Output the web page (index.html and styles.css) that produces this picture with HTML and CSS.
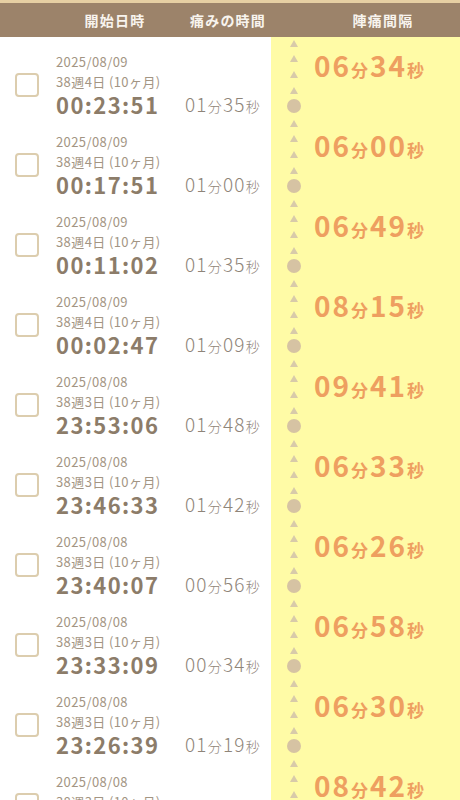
FILE: index.html
```html
<!DOCTYPE html>
<html lang="ja">
<head>
<meta charset="utf-8">
<link rel="stylesheet" href="styles.css">
</head>
<body>
<div class="top-strip"></div>
<header class="head">
  <div class="h-start">開始日時</div>
  <div class="h-dur">痛みの時間</div>
  <div class="h-int">陣痛間隔</div>
</header>
<ul class="list">
  <li class="row">
    <div class="left">
      <span class="check"></span>
      <div class="info"><div class="date">2025/08/09</div><div class="week">38週4日 (10ヶ月)</div><div class="time">00:23:51</div></div>
      <div class="dur">01<small>分</small>35<small>秒</small></div>
    </div>
    <div class="right">
      <div class="line"><span class="slot"><i class="tri"></i></span><span class="slot"><i class="tri"></i></span><span class="slot"><i class="tri"></i></span><span class="slot"><i class="tri"></i></span><span class="slot"><i class="dot"></i></span></div>
      <div class="interval">06<small>分</small>34<small>秒</small></div>
    </div>
  </li>
  <li class="row">
    <div class="left">
      <span class="check"></span>
      <div class="info"><div class="date">2025/08/09</div><div class="week">38週4日 (10ヶ月)</div><div class="time">00:17:51</div></div>
      <div class="dur">01<small>分</small>00<small>秒</small></div>
    </div>
    <div class="right">
      <div class="line"><span class="slot"><i class="tri"></i></span><span class="slot"><i class="tri"></i></span><span class="slot"><i class="tri"></i></span><span class="slot"><i class="tri"></i></span><span class="slot"><i class="dot"></i></span></div>
      <div class="interval">06<small>分</small>00<small>秒</small></div>
    </div>
  </li>
  <li class="row">
    <div class="left">
      <span class="check"></span>
      <div class="info"><div class="date">2025/08/09</div><div class="week">38週4日 (10ヶ月)</div><div class="time">00:11:02</div></div>
      <div class="dur">01<small>分</small>35<small>秒</small></div>
    </div>
    <div class="right">
      <div class="line"><span class="slot"><i class="tri"></i></span><span class="slot"><i class="tri"></i></span><span class="slot"><i class="tri"></i></span><span class="slot"><i class="tri"></i></span><span class="slot"><i class="dot"></i></span></div>
      <div class="interval">06<small>分</small>49<small>秒</small></div>
    </div>
  </li>
  <li class="row">
    <div class="left">
      <span class="check"></span>
      <div class="info"><div class="date">2025/08/09</div><div class="week">38週4日 (10ヶ月)</div><div class="time">00:02:47</div></div>
      <div class="dur">01<small>分</small>09<small>秒</small></div>
    </div>
    <div class="right">
      <div class="line"><span class="slot"><i class="tri"></i></span><span class="slot"><i class="tri"></i></span><span class="slot"><i class="tri"></i></span><span class="slot"><i class="tri"></i></span><span class="slot"><i class="dot"></i></span></div>
      <div class="interval">08<small>分</small>15<small>秒</small></div>
    </div>
  </li>
  <li class="row">
    <div class="left">
      <span class="check"></span>
      <div class="info"><div class="date">2025/08/08</div><div class="week">38週3日 (10ヶ月)</div><div class="time">23:53:06</div></div>
      <div class="dur">01<small>分</small>48<small>秒</small></div>
    </div>
    <div class="right">
      <div class="line"><span class="slot"><i class="tri"></i></span><span class="slot"><i class="tri"></i></span><span class="slot"><i class="tri"></i></span><span class="slot"><i class="tri"></i></span><span class="slot"><i class="dot"></i></span></div>
      <div class="interval">09<small>分</small>41<small>秒</small></div>
    </div>
  </li>
  <li class="row">
    <div class="left">
      <span class="check"></span>
      <div class="info"><div class="date">2025/08/08</div><div class="week">38週3日 (10ヶ月)</div><div class="time">23:46:33</div></div>
      <div class="dur">01<small>分</small>42<small>秒</small></div>
    </div>
    <div class="right">
      <div class="line"><span class="slot"><i class="tri"></i></span><span class="slot"><i class="tri"></i></span><span class="slot"><i class="tri"></i></span><span class="slot"><i class="tri"></i></span><span class="slot"><i class="dot"></i></span></div>
      <div class="interval">06<small>分</small>33<small>秒</small></div>
    </div>
  </li>
  <li class="row">
    <div class="left">
      <span class="check"></span>
      <div class="info"><div class="date">2025/08/08</div><div class="week">38週3日 (10ヶ月)</div><div class="time">23:40:07</div></div>
      <div class="dur">00<small>分</small>56<small>秒</small></div>
    </div>
    <div class="right">
      <div class="line"><span class="slot"><i class="tri"></i></span><span class="slot"><i class="tri"></i></span><span class="slot"><i class="tri"></i></span><span class="slot"><i class="tri"></i></span><span class="slot"><i class="dot"></i></span></div>
      <div class="interval">06<small>分</small>26<small>秒</small></div>
    </div>
  </li>
  <li class="row">
    <div class="left">
      <span class="check"></span>
      <div class="info"><div class="date">2025/08/08</div><div class="week">38週3日 (10ヶ月)</div><div class="time">23:33:09</div></div>
      <div class="dur">00<small>分</small>34<small>秒</small></div>
    </div>
    <div class="right">
      <div class="line"><span class="slot"><i class="tri"></i></span><span class="slot"><i class="tri"></i></span><span class="slot"><i class="tri"></i></span><span class="slot"><i class="tri"></i></span><span class="slot"><i class="dot"></i></span></div>
      <div class="interval">06<small>分</small>58<small>秒</small></div>
    </div>
  </li>
  <li class="row">
    <div class="left">
      <span class="check"></span>
      <div class="info"><div class="date">2025/08/08</div><div class="week">38週3日 (10ヶ月)</div><div class="time">23:26:39</div></div>
      <div class="dur">01<small>分</small>19<small>秒</small></div>
    </div>
    <div class="right">
      <div class="line"><span class="slot"><i class="tri"></i></span><span class="slot"><i class="tri"></i></span><span class="slot"><i class="tri"></i></span><span class="slot"><i class="tri"></i></span><span class="slot"><i class="dot"></i></span></div>
      <div class="interval">06<small>分</small>30<small>秒</small></div>
    </div>
  </li>
  <li class="row">
    <div class="left">
      <span class="check"></span>
      <div class="info"><div class="date">2025/08/08</div><div class="week">38週3日 (10ヶ月)</div><div class="time">23:20:09</div></div>
      <div class="dur">01<small>分</small>02<small>秒</small></div>
    </div>
    <div class="right">
      <div class="line"><span class="slot"><i class="tri"></i></span><span class="slot"><i class="tri"></i></span><span class="slot"><i class="tri"></i></span><span class="slot"><i class="tri"></i></span><span class="slot"><i class="dot"></i></span></div>
      <div class="interval">08<small>分</small>42<small>秒</small></div>
    </div>
  </li>
</ul>
</body>
</html>
```
FILE: styles.css
```css
* { box-sizing: border-box; }
html, body {
  margin: 0;
  padding: 0;
  background: #ffffff;
  font-family: "Noto Sans CJK JP", "Noto Sans", sans-serif;
  overflow: hidden;
  height: 800px;
}
.top-strip {
  height: 3px;
  background: #e6cfa3;
}
.head {
  height: 34px;
  background: #9c836a;
  display: grid;
  grid-template-columns: 56px 118px 108px 24px 154px;
  align-items: center;
  color: #f8f4ee;
  font-size: 14px;
  font-weight: 700;
  letter-spacing: 1.2px;
  text-align: center;
}
.h-start { grid-column: 2; }
.h-dur { grid-column: 3; }
.h-int { grid-column: 5; }
.list {
  list-style: none;
  margin: 0;
  padding: 0;
}
.row {
  display: flex;
  height: 80px;
}
.left {
  width: 271px;
  display: flex;
  padding-left: 15px;
  background: #ffffff;
}
.check {
  width: 24px;
  height: 24px;
  margin-top: 36px;
  border: 2px solid #dccdae;
  border-radius: 4px;
  flex: none;
}
.info {
  width: 129px;
  margin-left: 17px;
  padding-top: 15px;
  flex: none;
}
.date, .week {
  font-size: 13px;
  line-height: 20px;
  color: #a39583;
  letter-spacing: 0.4px;
  white-space: nowrap;
}
.time {
  font-size: 22px;
  line-height: 24px;
  font-weight: 700;
  color: #8c7c69;
  letter-spacing: 1.4px;
}
.dur {
  margin-top: 55px;
  font-size: 19px;
  line-height: 24px;
  font-weight: 300;
  color: #8f8579;
  letter-spacing: 1.2px;
  white-space: nowrap;
  height: 24px;
}
.dur small {
  font-size: 14px;
}
.right {
  flex: 1;
  background: #fffba6;
  display: flex;
  padding-left: 16px;
}
.line {
  width: 14px;
  display: flex;
  flex-direction: column;
  flex: none;
}
.slot {
  height: 16px;
  display: flex;
  align-items: center;
  justify-content: center;
}
.slot:first-child { height: 13px; }
.tri {
  width: 0;
  height: 0;
  border-left: 4px solid transparent;
  border-right: 4px solid transparent;
  border-bottom: 7px solid #d8caa9;
}
.dot {
  width: 14px;
  height: 14px;
  border-radius: 50%;
  background: #d6c3a3;
}
.interval {
  margin-left: 13px;
  margin-top: 13px;
  font-size: 28px;
  line-height: 30px;
  height: 30px;
  font-weight: 700;
  color: #ee9f60;
  letter-spacing: 2px;
  white-space: nowrap;
}
.interval small {
  font-size: 17px;
}
```
